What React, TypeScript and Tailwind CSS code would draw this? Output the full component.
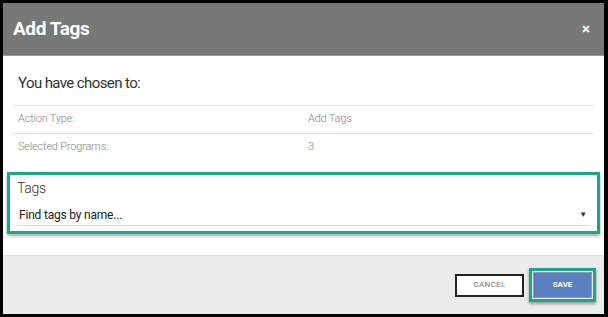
import React from "react";

export default function App() {
  return (
    <div
      className="w-[608px] h-[317px] bg-black pt-[3px] pl-[3px] pr-[4px] pb-[3px] overflow-hidden"
      style={{ fontFamily: "Roboto, 'Liberation Sans', sans-serif" }}
    >
      <div className="flex flex-col h-full bg-white">
        {/* Header */}
        <div className="h-[53px] bg-[#787878] flex items-center justify-between pl-[10px] pr-[14px] border-b border-[#9a9a9a]">
          <span className="text-white font-bold text-[19px] tracking-[-0.4px]">Add Tags</span>
          <span className="text-white font-bold text-[15px] leading-none">×</span>
        </div>
        {/* Body */}
        <div className="flex-1 flex flex-col px-[10px]">
          <div className="h-[49px] flex items-center pl-[5px] pt-[5px] text-[15px] text-[#333] tracking-[-0.6px]">
            You have chosen to:
          </div>
          <div className="border-t border-[#e4e4e4] h-[28px] flex items-center text-[11px] text-[#888] font-light tracking-[-0.2px]">
            <span className="w-[295px] pl-[5px]">Action Type:</span>
            <span>Add Tags</span>
          </div>
          <div className="border-t border-[#e4e4e4] h-[28px] flex items-center text-[11px] text-[#888] font-light tracking-[-0.2px]">
            <span className="w-[295px] pl-[5px]">Selected Programs:</span>
            <span className="text-[#888]">3</span>
          </div>
          <div className="mt-[11px] -mx-[6px] border-[3px] border-[#17a98a] h-[62px] shadow-[0_2px_3px_rgba(0,0,0,0.35)] flex flex-col px-[7px]">
            <div className="text-[14px] text-[#333] font-light pt-[3px] leading-[20px] tracking-[-0.3px]">Tags</div>
            <div className="mt-[6px] flex items-center justify-between border-b border-[#dcdcdc] h-[22px] pl-[2px] pr-[3px] text-[12px] text-[#222] tracking-[-0.2px]">
              <span>Find tags by name...</span>
              <span className="text-[8px] text-[#333]">▼</span>
            </div>
          </div>
        </div>
        {/* Footer */}
        <div className="h-[59px] bg-[#ececec] border-t border-[#dedede] flex items-center justify-end pr-[8px] gap-[5px]">
          <div className="w-[69px] h-[23px] border-2 border-[#222] bg-white flex items-center justify-center text-[8px] text-[#777] tracking-[0.3px]">
            CANCEL
          </div>
          <div className="border-[3px] border-[#17a98a] p-[1px] shadow-[0_2px_3px_rgba(0,0,0,0.35)]">
            <div className="w-[59px] h-[26px] bg-[#5b7fc1] flex items-center justify-center text-[8px] font-bold text-white border border-[#8a9ab8]">
              SAVE
            </div>
          </div>
        </div>
      </div>
    </div>
  );
}
